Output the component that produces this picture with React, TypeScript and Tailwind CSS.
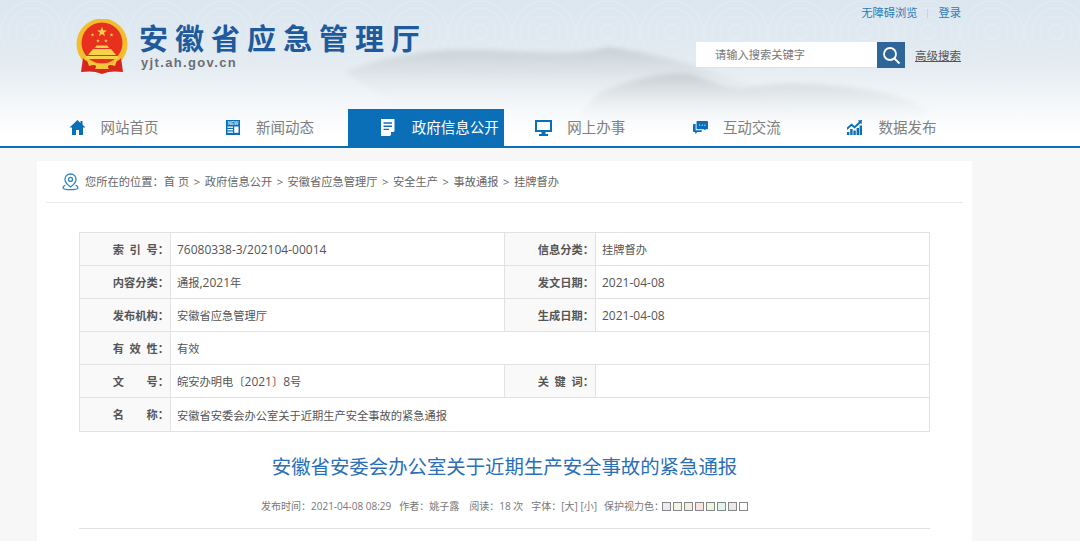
const navItems = [
  { label: '网站首页', icon: 'home' },
  { label: '新闻动态', icon: 'news' },
  { label: '政府信息公开', icon: 'doc', active: true },
  { label: '网上办事', icon: 'monitor' },
  { label: '互动交流', icon: 'chat' },
  { label: '数据发布', icon: 'chart' },
];

const crumbs = ['首 页', '政府信息公开', '安徽省应急管理厅', '安全生产', '事故通报', '挂牌督办'];

const swatches = ['bg-[#e9edf3]', 'bg-[#f3f6e4]', 'bg-[#f8ebe0]', 'bg-[#f8e3e0]', 'bg-[#eef7dc]', 'bg-[#dff5ee]', 'bg-[#e8e8ee]', 'bg-white'];

function NavIcon({ name, active }: { name: string; active?: boolean }) {
  const color = active ? '#ffffff' : '#0b6fb8';
  if (name === 'home')
    return (
      <svg width="17" height="17" viewBox="0 0 17 17" fill={color}>
        <path d="M8.5 1 L0.5 8.6 L3 8.6 L3 16 L7 16 L7 11 L10 11 L10 16 L14 16 L14 8.6 L16.5 8.6 L13.5 5.8 L13.5 2 L11.5 2 L11.5 3.9 Z" />
      </svg>
    );
  if (name === 'news')
    return (
      <svg width="14" height="15" viewBox="0 0 14 15">
        <rect width="14" height="15" fill={color} />
        <text x="7" y="5" textAnchor="middle" fontSize="4.6" fontWeight="700" fontFamily="Liberation Sans" fill="#d5e6f3">NEW</text>
        <rect x="1.5" y="6.5" width="5.5" height="1.3" fill="#fff" />
        <rect x="1.5" y="9" width="5.5" height="1.3" fill="#fff" />
        <rect x="1.5" y="11.5" width="5.5" height="1.3" fill="#fff" />
        <rect x="8.2" y="6.5" width="4.3" height="6.3" fill="#fff" />
      </svg>
    );
  if (name === 'doc')
    return (
      <svg width="14" height="17" viewBox="0 0 14 17">
        <path d="M0 0 H13.5 V12 L9 17 H0 Z" fill={color} />
        <path d="M2.5 4 H11 M2.5 7.2 H11 M2.5 10.4 H8" stroke="#0b6fb8" strokeWidth="1.4" />
        <path d="M10 13 H13.5 L10 16.5 Z" fill="#0b6fb8" />
      </svg>
    );
  if (name === 'monitor')
    return (
      <svg width="17" height="16" viewBox="0 0 17 16" fill={color}>
        <path fillRule="evenodd" d="M0 0 H17 V12 H10.5 V14 H13 V16 H4 V14 H6.5 V12 H0 Z M2 2 V10 H15 V2 Z" />
      </svg>
    );
  if (name === 'chat')
    return (
      <svg className="ml-[2px]" width="17" height="15" viewBox="0 0 17 15" fill={color}>
        <path d="M5 0 H16 A1 1 0 0 1 17 1 V8.5 A1 1 0 0 1 16 9.5 H14 V11 L12 9.5 H5 A1 1 0 0 1 4 8.5 V1 A1 1 0 0 1 5 0 Z" />
        <path d="M1 3.5 H3 V10.5 H10 V11.5 A1 1 0 0 1 9 12.5 H5 L2.5 15 V12.5 H1 A1 1 0 0 1 0 11.5 V4.5 A1 1 0 0 1 1 3.5 Z" />
        <circle cx="7.5" cy="4.8" r="0.7" fill="#fff" />
        <circle cx="10.5" cy="4.8" r="0.7" fill="#fff" />
        <circle cx="13.5" cy="4.8" r="0.7" fill="#fff" />
      </svg>
    );
  return (
    <svg width="15" height="15" viewBox="0 0 15 15" fill={color}>
      <path d="M0 7.5 L4.5 3.5 L7.5 6 L12 1.8 L10.8 0.6 L15 0 L14.6 4.4 L13.4 3.2 L7.6 8.6 L4.5 6 L0 10 Z" />
      <rect x="0" y="12" width="2.4" height="3" />
      <rect x="3.2" y="9" width="2.4" height="6" />
      <rect x="6.4" y="10.5" width="2.4" height="4.5" />
      <rect x="9.6" y="8" width="2.4" height="7" />
      <rect x="12.6" y="5.5" width="2.4" height="9.5" />
    </svg>
  );
}

function Emblem() {
  const star = '0,-1 0.235,-0.324 0.951,-0.309 0.38,0.124 0.588,0.809 0,0.4 -0.588,0.809 -0.38,0.124 -0.951,-0.309 -0.235,-0.324';
  return (
    <svg width="52" height="56" viewBox="0 0 52 56">
      <circle cx="26" cy="25" r="25.5" fill="#f3bd2e" />
      <circle cx="26" cy="24" r="20.5" fill="#e8301f" />
      <polygon points={star} transform="translate(26 13) scale(5.2)" fill="#f8d24a" />
      <polygon points={star} transform="translate(16.5 16) scale(2)" fill="#f8d24a" />
      <polygon points={star} transform="translate(35.5 16) scale(2)" fill="#f8d24a" />
      <polygon points={star} transform="translate(22 22) scale(2)" fill="#f8d24a" />
      <polygon points={star} transform="translate(30 22) scale(2)" fill="#f8d24a" />
      <path d="M19 29 H33 L31.5 26.5 H20.5 Z M12 36 L17 30 H35 L40 36 Z M10 37 H42 V40 H10 Z" fill="#f8d24a" />
      <path d="M7 39 C13 47 39 47 45 39 L47 53 C39 52 33 52 26 55 C19 52 13 52 5 53 Z" fill="#d7261e" />
      <path d="M11 41 C17 46 35 46 41 41 L39 47 C34 45 30 46 33 50 H19 C22 46 18 45 13 47 Z" fill="#f6c63a" />
    </svg>
  );
}

function HeaderArt() {
  return (
    <svg className="absolute inset-0" width="1080" height="146" viewBox="0 0 1080 146">
      <defs>
        <linearGradient id="fade" x1="0" y1="0" x2="0" y2="1">
          <stop offset="0" stopColor="#a4abb0" stopOpacity="0.42" />
          <stop offset="1" stopColor="#ffffff" stopOpacity="0" />
        </linearGradient>
        <filter id="mist">
          <feGaussianBlur stdDeviation="2.5" />
        </filter>
        <pattern id="swirl" width="64" height="64" patternUnits="userSpaceOnUse">
          <g fill="none" stroke="#ffffff" strokeWidth="1">
            <circle cx="32" cy="32" r="8" />
            <circle cx="32" cy="32" r="16" />
            <circle cx="32" cy="32" r="24" />
            <circle cx="32" cy="32" r="31" />
          </g>
        </pattern>
        <linearGradient id="swirlFade" x1="0" y1="0" x2="0" y2="1">
          <stop offset="0" stopColor="#fff" stopOpacity="0.28" />
          <stop offset="1" stopColor="#fff" stopOpacity="0" />
        </linearGradient>
        <mask id="swirlMask">
          <rect width="1080" height="110" fill="url(#swirlFade)" />
        </mask>
      </defs>
      <rect width="1080" height="110" fill="url(#swirl)" mask="url(#swirlMask)" />
      <g filter="url(#mist)">
        <path d="M345 72 C380 58 420 50 470 50 C520 50 570 58 608 47 C650 52 700 66 750 84 L800 120 L420 120 Z" fill="url(#fade)" />
        <path d="M600 92 C630 80 660 72 690 74 C710 80 730 90 745 88 C780 80 830 84 870 90 C895 95 915 100 930 112 L880 134 L560 134 Z" fill="url(#fade)" />
      </g>
    </svg>
  );
}

// CJK runs sit at 11.25px and the Latin runs at 12px, as on the original page
function Value({ text }: { text: string }) {
  const runs = text.match(/[\x20-\x7e]+|[^\x20-\x7e]+/g) ?? [];
  return (
    <span className="pb-[2px]">
      {runs.map((run, i) => (
        <span key={i} className={/^[\x20-\x7e]/.test(run) ? 'text-[12px]' : 'text-[11.25px]'}>
          {run}
        </span>
      ))}
    </span>
  );
}

function Cell({ label, value, wide, last }: { label: string; value: string; wide?: boolean; last?: boolean }) {
  return (
    <>
      <div className="flex items-center justify-end bg-[#f9f9f9] pr-[1px] pt-[2px] font-bold text-[#555] text-[11.25px] border-r border-[#e2e2e2]">
        <span className="flex w-[45px] justify-between">
          {label.split('').map((ch) => (
            <span key={ch}>{ch}</span>
          ))}
        </span>
        <span className="w-[11.25px]">：</span>
      </div>
      <div className={`flex items-center pl-[6px] text-[#555] ${wide ? 'col-span-3' : last ? '' : 'border-r border-[#e2e2e2]'}`}>
        <Value text={value} />
      </div>
    </>
  );
}

export default function App() {
  return (
    <div className="font-['Open_Sans','Noto_Sans_CJK_SC',sans-serif] w-[1080px] h-[541px] overflow-hidden bg-[#f7f7f7]">
      <header className="relative h-[148px] bg-[linear-gradient(#dbe6ef_0%,#e4ecf2_45%,#f5f8fa_72%,#ffffff_92%)]">
        <HeaderArt />
        <div className="relative h-[109px] flex justify-between">
          <div className="flex items-start pl-[76px] pt-[19px] gap-[11px]">
            <Emblem />
            <div className="pt-[4px]">
              <div className="text-[29px] leading-[32px] font-bold tracking-[7px] text-[#1f5a9c] whitespace-nowrap">安徽省应急管理厅</div>
              <div className="font-['Liberation_Sans',sans-serif] text-[13px] leading-[16px] ml-[2px] font-bold tracking-[1.35px] text-[#6b6f73]">yjt.ah.gov.cn</div>
            </div>
          </div>
          <div className="w-[384px] pr-[119px] flex flex-col items-end">
            <div className="flex items-center h-[13px] mt-[7px] text-[11.25px] text-[#2a7ab8]">
              <span>无障碍浏览</span>
              <span className="mx-[10px] w-px h-[9px] bg-[#c6d6e2]" />
              <span>登录</span>
            </div>
            <div className="flex items-center mt-[22px]">
              <div className="w-[181px] h-[26px] bg-white border-b border-[#dfe3e8] pl-[19px] pt-[2px] flex items-center text-[11.25px] text-[#777]">请输入搜索关键字</div>
              <div className="w-[28px] h-[26px] bg-[#2f6699] flex items-center justify-center">
                <svg width="19" height="19" viewBox="0 0 19 19" fill="none" stroke="#fff">
                  <circle cx="8" cy="8" r="6" strokeWidth="1.8" />
                  <path d="M12.5 12.5 L17.5 17.5" strokeWidth="2" />
                </svg>
              </div>
              <span className="ml-[10px] pt-[2px] text-[11.5px] text-[#555] underline">高级搜索</span>
            </div>
          </div>
        </div>
        <nav className="relative flex h-[39px] pl-[37px] border-b-2 border-[#0b6fb8]">
          {navItems.map((item) => (
            <div key={item.label} className={`w-[155.6px] flex items-center gap-[15px] pl-[31.5px] text-[14.5px] ${item.active ? 'bg-[#0b6fb8] text-white' : 'text-[#808080]'}`}>
              <div className="w-[17px] flex justify-center">
                <NavIcon name={item.icon} active={item.active} />
              </div>
              <span className="whitespace-nowrap pt-[1px]">{item.label}</span>
            </div>
          ))}
        </nav>
      </header>

      <main className="ml-[37px] mt-[13px] w-[935px] h-[400px] bg-white px-[9px]">
        <div className="h-[42px] flex items-center pl-[16px] border-b border-[#e8e8e8] text-[11.25px] text-[#666]">
          <svg className="mr-[6px]" width="17" height="18" viewBox="0 0 17 18" fill="none" stroke="#2a86c8" strokeWidth="1.3">
            <path d="M8.5 1 C5 1 3 3.6 3 6.4 C3 9.6 6.5 12.5 8.5 14 C10.5 12.5 14 9.6 14 6.4 C14 3.6 12 1 8.5 1 Z" />
            <circle cx="8.5" cy="6.4" r="2" />
            <path d="M3.4 12 C1.5 13 0.8 14 1.2 15.2 C2 17 15 17 15.8 15.2 C16.2 14 15.5 13 13.6 12" />
          </svg>
          <div className="flex items-center pt-[2px]">
            <span>您所在的位置：</span>
            {crumbs.map((crumb, i) => (
              <span key={crumb} className="flex items-center">
                {i > 0 && <span className="mx-[4.5px]">&gt;</span>}
                <span>{crumb}</span>
              </span>
            ))}
          </div>
        </div>

        <div className="ml-[33px] mt-[29px] w-[851px] border border-[#e2e2e2] grid grid-cols-[91px_334px_91px_1fr] auto-rows-[33px] [&>div]:border-b [&>div]:border-[#e2e2e2] [&>div:nth-last-child(-n+2)]:border-b-0">
          <Cell label="索引号" value="76080338-3/202104-00014" />
          <Cell label="信息分类" value="挂牌督办" last />
          <Cell label="内容分类" value="通报,2021年" />
          <Cell label="发文日期" value="2021-04-08" last />
          <Cell label="发布机构" value="安徽省应急管理厅" />
          <Cell label="生成日期" value="2021-04-08" last />
          <Cell label="有效性" value="有效" wide />
          <Cell label="文号" value="皖安办明电〔2021〕8号" />
          <Cell label="关键词" value="" last />
          <Cell label="名称" value="安徽省安委会办公室关于近期生产安全事故的紧急通报" wide />
        </div>

        <h1 className="mt-[21px] text-center text-[19.4px] leading-[28px] text-[#2a6fb8]">安徽省安委会办公室关于近期生产安全事故的紧急通报</h1>

        <div className="mt-[17px] flex justify-center items-center text-[10px] text-[#777] h-[16px]">
          <span>发布时间：2021-04-08 08:29</span>
          <span className="ml-[8px]">作者：姚子露</span>
          <span className="ml-[10px]">阅读：18 次</span>
          <span className="ml-[8px]">字体：[大] [小]</span>
          <span className="ml-[7px]">保护视力色：</span>
          <div className="flex gap-[2px] -ml-[2px]">
            {swatches.map((c) => (
              <span key={c} className={`w-[9px] h-[9px] border border-[#888] ${c}`} />
            ))}
          </div>
        </div>

        <div className="ml-[33px] mt-[14px] w-[851px] border-t border-[#e2e2e2]" />
      </main>
    </div>
  );
}
